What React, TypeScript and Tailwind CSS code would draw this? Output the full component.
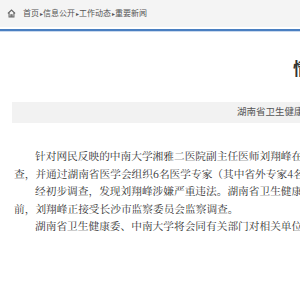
import React from "react";

const lines = [
  { indent: true, text: "针对网民反映的中南大学湘雅二医院副主任医师刘翔峰在医疗活动中存在的问题，湖南省卫生健康委、中南大学高度重视，立即组织调" },
  { indent: false, text: "查，并通过湖南省医学会组织6名医学专家（其中省外专家4名、省内专家2名）进行了调查核实。" },
  { indent: true, text: "经初步调查，发现刘翔峰涉嫌严重违法。湖南省卫生健康委、中南大学已将相关问题线索移交有关部门。目" },
  { indent: false, text: "前，刘翔峰正接受长沙市监察委员会监察调查。" },
  { indent: true, text: "湖南省卫生健康委、中南大学将会同有关部门对相关单位和人员依法依规严肃处理。" },
];

const HomeIcon = () => (
  <svg width="9" height="9" viewBox="0 0 10 10" fill="none" stroke="#666" strokeWidth="1.2">
    <path d="M1 5 L5 1.2 L9 5" />
    <path d="M2.3 4.2 V8.8 H7.7 V4.2" />
    <path d="M4.3 8.8 V6.4 H5.7 V8.8" />
  </svg>
);

export default function App() {
  return (
    <div className="w-[300px] h-[300px] overflow-hidden bg-white font-['Liberation_Sans','Noto_Sans_CJK_SC',sans-serif]">
      <div className="h-[27px] bg-[#f4f4f4] flex items-center pl-[7px] gap-[7px] text-[8px] text-[#555] whitespace-nowrap">
        <HomeIcon />
        <span className="pt-[1px]">
          首页<span className="text-[6px] px-[0.5px]">▸</span>信息公开<span className="text-[6px] px-[0.5px]">▸</span>工作动态<span className="text-[6px] px-[0.5px]">▸</span>重要新闻
        </span>
      </div>
      <div className="h-[2px] mt-[2px] bg-[#4a7fc1]" />
      <div className="h-[1px] bg-[#c9d9ee]" />

      <div className="mt-[27px] pl-[293px] h-[20px] flex items-center text-[17px] font-bold text-[#333] whitespace-nowrap leading-none">
        情况通报
      </div>

      <div className="mt-[23px] ml-[12px] h-[21px] bg-[#f2f2f2] flex items-center pl-[225px] text-[9.5px] text-[#555] whitespace-nowrap">
        湖南省卫生健康委 中南大学　发布时间：2023-03-15
      </div>

      <div className="mt-[24px] pl-[14px] text-[10.7px] leading-[17.6px] text-[#333] font-['Noto_Serif_CJK_SC','Noto_Sans_CJK_SC',serif]">
        {lines.map((l, i) => (
          <div key={i} className={l.indent ? "whitespace-nowrap pl-[21px]" : "whitespace-nowrap"}>
            {l.text}
          </div>
        ))}
      </div>
    </div>
  );
}
